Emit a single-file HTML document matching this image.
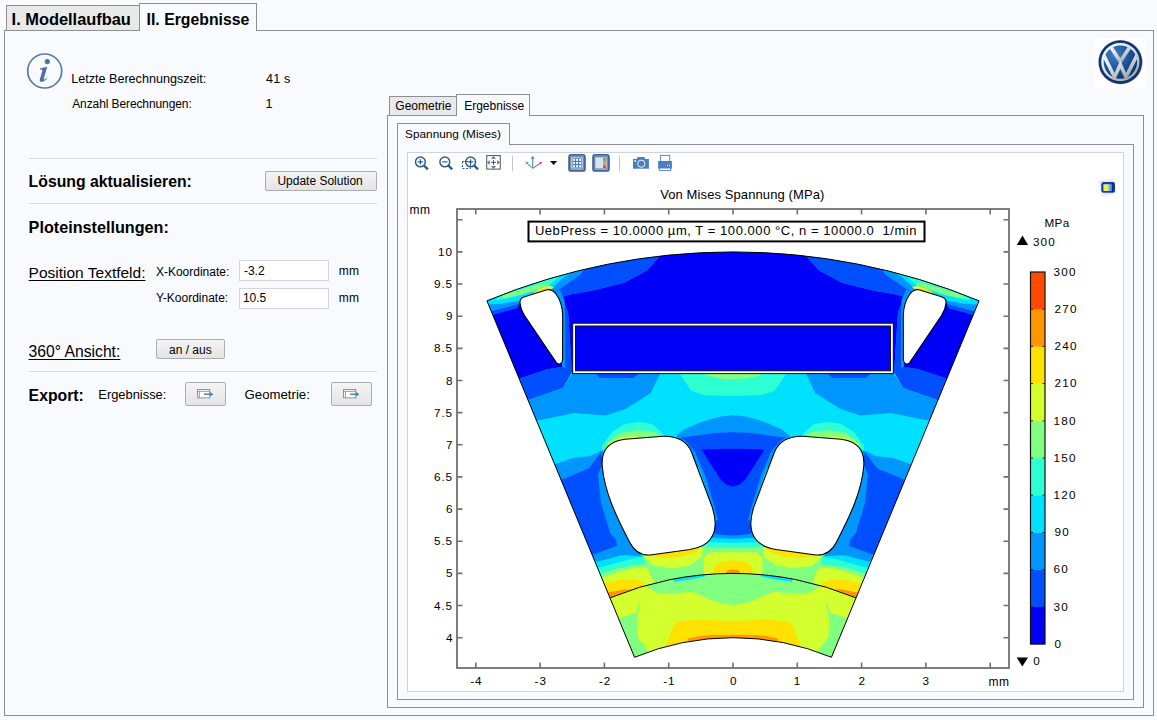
<!DOCTYPE html>
<html><head><meta charset="utf-8">
<style>
html,body{margin:0;padding:0;}
body{width:1157px;height:720px;overflow:hidden;position:relative;background:#F9FAFE;font-family:"Liberation Sans",sans-serif;color:#000;}
.a{position:absolute;box-sizing:border-box;}
.t{position:absolute;white-space:pre;line-height:1;}
.u{text-decoration:underline;text-underline-offset:1.5px;text-decoration-thickness:1px;}
.btn{position:absolute;box-sizing:border-box;border:1px solid #ADADAD;background:linear-gradient(#F4F4F4,#E4E4E4);border-radius:2px;}
.inp{position:absolute;box-sizing:border-box;border:1px solid #D3D5DA;background:#FFFFFF;}
.sep{position:absolute;height:1px;background:#D9DADD;}
</style></head>
<body>
<div class="a" style="left:4px;top:30px;width:1150px;height:686px;border:1px solid #8C8F94;"></div>
<div class="a" style="left:6px;top:5px;width:134px;height:25px;border:1px solid #8C8F94;border-bottom:none;background:#E9E9E9;"></div>
<div class="a" style="left:139px;top:3px;width:118px;height:28px;border:1px solid #8C8F94;border-bottom:none;background:#F9FAFE;"></div>
<div class="a" style="left:140px;top:30px;width:116px;height:2px;background:#F9FAFE;"></div>
<svg class="a" style="left:25px;top:51px" width="40" height="40" viewBox="0 0 40 40"><circle cx="19.7" cy="20" r="17" fill="none" stroke="#557AA8" stroke-width="1.7"/><circle cx="22.3" cy="10.6" r="2.6" fill="#4E72A2"/><path d="M14.8 17.4 L22.3 15.8 L18.8 27.6 Q18.4 29.2 20 28.3 L21.6 27.1 L22 27.8 Q19 30.8 16.4 30.9 Q14.2 30.8 14.9 28 L17.4 19.8 Q17.7 18.4 15 18.6 Z" fill="#4E72A2"/></svg>
<div class="sep" style="left:29px;top:158px;width:348px;"></div>
<div class="btn" style="left:265px;top:171px;width:112px;height:20px;"></div>
<div class="sep" style="left:29px;top:203px;width:348px;"></div>
<div class="inp" style="left:239px;top:260px;width:90px;height:21px;"></div>
<div class="inp" style="left:239px;top:288px;width:90px;height:21px;"></div>
<div class="btn" style="left:156px;top:339px;width:69px;height:20px;"></div>
<div class="sep" style="left:29px;top:371px;width:348px;"></div>
<div class="btn" style="left:185px;top:382px;width:41px;height:24px;"></div>
<svg class="a" style="left:197px;top:388px" width="18" height="12"><rect x="0.6" y="1.5" width="12.2" height="8.4" fill="#fff" stroke="#7C7C7C" stroke-width="0.8"/><path d="M0.6 3.3 H12.8 M2.4 3.3 V9.9" stroke="#7C7C7C" stroke-width="0.8"/><path d="M7 6.2 H14" stroke="#3F7AC0" stroke-width="1.4"/><path d="M13.2 3.9 L16.2 6.2 L13.2 8.5 Z" fill="#3F7AC0"/></svg>
<div class="btn" style="left:331px;top:382px;width:41px;height:24px;"></div>
<svg class="a" style="left:343px;top:388px" width="18" height="12"><rect x="0.6" y="1.5" width="12.2" height="8.4" fill="#fff" stroke="#7C7C7C" stroke-width="0.8"/><path d="M0.6 3.3 H12.8 M2.4 3.3 V9.9" stroke="#7C7C7C" stroke-width="0.8"/><path d="M7 6.2 H14" stroke="#3F7AC0" stroke-width="1.4"/><path d="M13.2 3.9 L16.2 6.2 L13.2 8.5 Z" fill="#3F7AC0"/></svg>
<div class="a" style="left:1095px;top:38px;width:50px;height:50px;background:#fff;"></div>
<svg class="a" style="left:1097px;top:39px" width="46" height="46" viewBox="0 0 46 46">
<defs><radialGradient id="vwb" cx="0.35" cy="0.3" r="0.75"><stop offset="0" stop-color="#3F80C4"/><stop offset="0.55" stop-color="#1A4F98"/><stop offset="1" stop-color="#0C2C66"/></radialGradient>
<linearGradient id="vws" x1="0" y1="0" x2="0.8" y2="1"><stop offset="0" stop-color="#FFFFFF"/><stop offset="0.5" stop-color="#DDE1E6"/><stop offset="1" stop-color="#9AA1AA"/></linearGradient>
<clipPath id="vwc"><circle cx="23.4" cy="23.1" r="17"/></clipPath></defs>
<circle cx="23.4" cy="23.1" r="22.3" fill="#C8CDD3"/>
<circle cx="23.4" cy="23.1" r="21.8" fill="#0E3370"/>
<circle cx="23.4" cy="23.1" r="19.6" fill="url(#vwb)"/>
<circle cx="23.4" cy="23.1" r="17.9" fill="none" stroke="url(#vws)" stroke-width="2.4"/>
<g clip-path="url(#vwc)" fill="none" stroke="url(#vws)" stroke-width="3.6" stroke-linejoin="miter">
<path d="M11.3 4 L23.3 22.6 L35.5 4"/>
<path d="M5.2 13 L17.6 38 L23.3 25.6 L29 38 L41.6 13"/>
</g>
</svg>
<div class="a" style="left:387px;top:115px;width:757px;height:593px;border:1px solid #8C8F94;"></div>
<div class="a" style="left:389px;top:96px;width:68px;height:19px;border:1px solid #8C8F94;border-bottom:none;background:#E9E9E9;"></div>
<div class="a" style="left:456px;top:94px;width:74px;height:22px;border:1px solid #8C8F94;border-bottom:none;background:#F9FAFE;"></div>
<div class="a" style="left:457px;top:115px;width:72px;height:2px;background:#F9FAFE;"></div>
<div class="a" style="left:397px;top:144px;width:737px;height:556px;border:1px solid #8C8F94;"></div>
<div class="a" style="left:397px;top:123px;width:113px;height:22px;border:1px solid #8C8F94;border-bottom:none;background:#F9FAFE;"></div>
<div class="a" style="left:398px;top:144px;width:111px;height:2px;background:#F9FAFE;"></div>
<div class="a" style="left:407px;top:152px;width:717px;height:540px;border:1px solid #D2D3D6;background:#FFFFFF;"></div>
<div class="t " style="left:11.6px;top:11.3px;font-size:16.4px;font-weight:bold;">I. Modellaufbau</div>
<div class="t " style="left:146.6px;top:12.3px;font-size:15.8px;font-weight:bold;">II. Ergebnisse</div>
<div class="t " style="left:71.2px;top:73.3px;font-size:12.6px;">Letzte Berechnungszeit:</div>
<div class="t " style="left:266.0px;top:73.3px;font-size:12.6px;letter-spacing:0.2px;">41 s</div>
<div class="t " style="left:72.2px;top:98.2px;font-size:12.0px;letter-spacing:-0.1px;">Anzahl Berechnungen:</div>
<div class="t " style="left:265.4px;top:98.2px;font-size:12.6px;">1</div>
<div class="t " style="left:28.6px;top:174.1px;font-size:15.8px;font-weight:bold;">Lösung aktualisieren:</div>
<div class="t " style="left:277.4px;top:175.2px;font-size:12px;">Update Solution</div>
<div class="t " style="left:28.6px;top:219.0px;font-size:16.2px;font-weight:bold;">Ploteinstellungen:</div>
<div class="t u" style="left:28.6px;top:265.4px;font-size:15.5px;">Position Textfeld:</div>
<div class="t " style="left:155.9px;top:265.7px;font-size:12px;">X-Koordinate:</div>
<div class="t " style="left:243.9px;top:264.6px;font-size:12px;">-3.2</div>
<div class="t " style="left:338.8px;top:264.6px;font-size:12px;letter-spacing:0.3px;">mm</div>
<div class="t " style="left:155.9px;top:292.1px;font-size:12px;">Y-Koordinate:</div>
<div class="t " style="left:242.9px;top:292.1px;font-size:12px;">10.5</div>
<div class="t " style="left:338.8px;top:291.8px;font-size:12px;letter-spacing:0.3px;">mm</div>
<div class="t u" style="left:28.6px;top:344.2px;font-size:15.7px;">360° Ansicht:</div>
<div class="t " style="left:169.0px;top:343.6px;font-size:12px;">an / aus</div>
<div class="t " style="left:28.6px;top:388.0px;font-size:15.8px;font-weight:bold;">Export:</div>
<div class="t " style="left:98.3px;top:388.6px;font-size:12.9px;">Ergebnisse:</div>
<div class="t " style="left:244.6px;top:387.6px;font-size:13.2px;">Geometrie:</div>
<div class="t " style="left:395.3px;top:100.3px;font-size:12px;">Geometrie</div>
<div class="t " style="left:464.2px;top:100.3px;font-size:12px;">Ergebnisse</div>
<div class="t " style="left:405.1px;top:129.1px;font-size:11.8px;">Spannung (Mises)</div>
<!-- PLOT -->
<svg class="a" style="left:0;top:0" width="1157" height="720" viewBox="0 0 1157 720">
<defs><clipPath id="cu"><path d="M486.93 300.85 A643.0 643.0 0 0 1 979.07 300.85 L856.03 597.87 A321.5 321.5 0 0 0 609.97 597.87 Z"/></clipPath><clipPath id="cr"><path d="M609.97 597.87 A321.5 321.5 0 0 1 856.03 597.87 L831.43 657.28 A257.2 257.2 0 0 0 634.57 657.28 Z"/></clipPath></defs>
<path d="M486.93 300.85 A643.0 643.0 0 0 1 979.07 300.85 L856.03 597.87 A321.5 321.5 0 0 0 609.97 597.87 Z" fill="#00E1FF"/>
<g clip-path="url(#cu)"><g><path d="M470.0 300.0 L522.0 298.0 L522.0 306.0 L517.1 309.0 L505.4 312.5 L493.8 315.7 L470.0 324.0 Z" fill="#0050FF"/>
<path d="M470.0 290.0 L600.0 250.0 L588.2 269.4 L580.0 280.0 L566.0 289.0 L556.0 292.0 L520.0 302.0 L517.1 304.5 L501.6 308.4 L490.7 311.5 L480.0 320.0 Z" fill="#0096FF"/>
<path d="M470.0 295.0 L571.0 255.0 L571.0 273.3 L563.8 277.3 L549.8 289.8 L518.7 300.7 L501.6 303.8 L487.6 304.5 L470.0 312.0 Z" fill="#00E1FF"/>
<path d="M600.0 250.0 L660.0 245.0 L659.8 256.2 L647.3 270.2 L624.0 282.7 L592.9 290.4 L571.1 294.3 L561.8 296.7 L568.0 312.2 L568.8 323.0 L572.0 372.0 L560.0 372.0 L555.0 292.0 L580.0 275.0 Z" fill="#0050FF"/>
<path d="M659.8 245.0 L734.0 245.0 L734.0 374.0 L572.0 374.0 L568.8 323.0 L568.0 312.2 L561.8 296.7 L571.1 294.3 L592.9 290.4 L624.0 282.7 L647.3 270.2 L659.8 256.2 Z" fill="#0000F8"/>
<path d="M556.0 291.0 L560.0 290.0 L564.5 300.0 L565.0 320.0 L565.0 368.0 L562.5 368.0 Z" fill="#0096FF"/>
<path d="M495.0 294.0 L530.0 282.5 L556.0 274.0 L560.0 276.0 L548.0 286.0 L520.0 295.5 L497.0 300.5 Z" fill="#2DFFD2"/>
<path d="M502.0 295.5 L522.0 289.5 L545.0 282.5 L550.0 284.0 L540.0 288.5 L521.0 294.5 L503.0 298.5 Z" fill="#80FF80"/>
<path d="M538.0 289.5 L549.0 285.5 L554.0 287.5 L549.0 290.5 L536.0 293.0 Z" fill="#D2FF2D"/>
<path d="M533.0 291.8 L545.0 288.2 L551.0 288.2 L551.0 291.0 L535.0 294.5 Z" fill="#FFE100"/>
<path d="M470.0 368.0 L520.4 378.3 L547.4 369.3 L563.1 367.0 L572.0 372.0 L563.0 388.0 L529.4 399.7 L470.0 397.0 Z" fill="#0050FF"/>
<path d="M470.0 318.0 L493.8 314.7 L505.4 311.5 L517.1 308.4 L522.0 300.0 L560.0 300.0 L562.0 367.0 L547.4 369.3 L520.4 378.3 L470.0 385.0 Z" fill="#0000F8"/>
<path d="M470.0 397.0 L529.4 399.7 L563.0 388.0 L572.0 374.0 L659.8 374.0 L650.8 392.9 L626.0 408.7 L605.8 415.4 L574.4 413.1 L540.7 419.9 L470.0 424.0 Z" fill="#0096FF"/>
<path d="M595.0 373.0 L640.0 373.0 L633.0 378.0 L600.0 378.0 Z" fill="#0050FF"/>
<path d="M680.0 374.0 L691.2 390.7 L704.7 395.2 L734.0 396.0 L734.0 374.0 Z" fill="#2DFFD2"/>
<path d="M705.0 373.0 L734.0 373.0 L734.0 379.5 L733.0 379.5 L722.0 378.8 L712.0 377.0 L705.0 375.0 Z" fill="#80FF80"/>
<path d="M602.0 446.0 L612.0 432.0 L625.0 424.0 L638.0 421.9 L652.0 424.0 L664.5 435.2 L672.0 440.0 L602.0 452.0 Z" fill="#2DFFD2"/>
<path d="M606.0 444.0 L620.0 433.0 L638.0 430.0 L655.0 432.0 L664.0 438.0 L606.0 448.0 Z" fill="#80FF80"/>
<path d="M608.0 443.0 L622.0 437.0 L640.0 436.0 L608.0 449.0 Z" fill="#D2FF2D"/>
<path d="M676.0 436.0 L683.6 429.8 L700.0 422.5 L712.6 418.5 L722.0 416.3 L733.0 415.3 L734.0 415.3 L734.0 541.0 L712.0 541.0 L716.0 520.0 L700.0 470.0 L680.0 440.0 Z" fill="#0096FF"/>
<path d="M680.0 437.5 L690.0 436.5 L700.0 435.0 L715.0 433.0 L733.0 432.3 L734.0 432.3 L734.0 536.0 L720.0 536.0 L718.0 520.0 L714.0 505.0 L705.0 475.0 L695.0 452.0 L686.0 441.0 Z" fill="#0050FF"/>
<path d="M701.6 449.5 L715.0 449.0 L733.0 448.8 L734.0 448.8 L734.0 486.5 L733.0 486.5 L727.0 485.0 L721.0 480.0 L710.0 463.0 Z" fill="#0000F8"/>
<path d="M470.0 470.0 L556.1 463.7 L573.2 458.0 L590.4 456.1 L603.0 450.0 L630.0 545.0 L643.0 557.0 L620.5 555.3 L598.0 562.2 L470.0 580.0 Z" fill="#0096FF"/>
<path d="M470.0 484.0 L562.6 479.3 L588.6 468.6 L597.8 456.4 L601.0 452.0 L603.0 462.0 L598.0 475.0 L600.8 502.0 L610.0 532.7 L616.0 540.0 L617.0 545.8 L593.7 554.5 L470.0 570.0 Z" fill="#0050FF"/>
<path d="M470.0 575.0 L597.2 561.4 L611.9 557.9 L625.7 555.3 L641.2 556.2 L650.0 553.0 L650.0 620.0 L470.0 620.0 Z" fill="#00E1FF"/>
<path d="M470.0 580.0 L599.8 567.4 L617.0 563.1 L629.1 559.6 L643.0 557.0 L650.0 556.0 L650.0 620.0 L470.0 620.0 Z" fill="#2DFFD2"/>
<path d="M470.0 585.0 L602.4 573.5 L617.0 568.3 L632.6 565.7 L644.7 564.0 L650.0 560.0 L650.0 620.0 L470.0 620.0 Z" fill="#80FF80"/>
<path d="M470.0 590.0 L604.1 576.9 L617.0 572.6 L632.6 568.3 L646.4 567.4 L649.9 572.6 L653.3 579.5 L656.0 590.0 L470.0 620.0 Z" fill="#D2FF2D"/>
<path d="M470.0 596.0 L606.7 583.0 L622.2 579.5 L636.0 579.5 L644.7 583.0 L648.0 592.0 L470.0 620.0 Z" fill="#FFE100"/>
<path d="M470.0 605.0 L609.3 592.2 L625.7 589.3 L634.0 590.0 L640.0 595.0 L470.0 620.0 Z" fill="#FF9600"/>
<path d="M643.0 553.0 L700.0 546.0 L706.0 548.0 L704.0 600.0 L650.0 600.0 L653.3 579.5 L649.9 572.6 L646.4 567.4 Z" fill="#80FF80"/>
<path d="M640.0 553.0 L700.0 545.0 L703.5 550.0 L701.7 557.0 L689.6 565.7 L672.4 568.3 L653.3 565.7 L646.4 558.8 Z" fill="#D2FF2D"/>
<path d="M640.0 552.0 L700.0 545.0 L700.0 547.5 L696.6 551.9 L681.0 557.0 L663.7 557.9 L646.4 555.3 Z" fill="#FFE100"/>
<path d="M703.0 532.0 L734.0 532.0 L734.0 600.0 L703.0 600.0 Z" fill="#0096FF"/>
<path d="M703.0 537.5 L716.0 538.0 L734.0 538.9 L734.0 600.0 L703.0 600.0 Z" fill="#00E1FF"/>
<path d="M703.0 542.0 L716.0 542.5 L734.0 543.0 L734.0 600.0 L703.0 600.0 Z" fill="#2DFFD2"/>
<path d="M703.0 546.5 L716.0 547.0 L734.0 547.5 L734.0 600.0 L703.0 600.0 Z" fill="#80FF80"/>
<path d="M703.5 557.0 L710.0 552.5 L734.0 552.0 L734.0 600.0 L703.5 600.0 Z" fill="#D2FF2D"/>
<path d="M713.3 575.0 L713.5 569.0 L716.0 564.5 L722.0 561.5 L733.0 560.5 L734.0 560.5 L734.0 600.0 L713.3 600.0 Z" fill="#FFE100"/>
<path d="M725.6 575.0 L726.5 571.0 L730.0 569.6 L734.0 569.4 L734.0 600.0 L725.6 600.0 Z" fill="#FF9600"/>
<path d="M716.0 520.0 L734.0 520.0 L734.0 535.4 L732.9 535.4 L719.0 534.6 L714.0 533.0 Z" fill="#0050FF"/></g>
<g transform="translate(1466,0) scale(-1,1)"><path d="M470.0 300.0 L522.0 298.0 L522.0 306.0 L517.1 309.0 L505.4 312.5 L493.8 315.7 L470.0 324.0 Z" fill="#0050FF"/>
<path d="M470.0 290.0 L600.0 250.0 L588.2 269.4 L580.0 280.0 L566.0 289.0 L556.0 292.0 L520.0 302.0 L517.1 304.5 L501.6 308.4 L490.7 311.5 L480.0 320.0 Z" fill="#0096FF"/>
<path d="M470.0 295.0 L571.0 255.0 L571.0 273.3 L563.8 277.3 L549.8 289.8 L518.7 300.7 L501.6 303.8 L487.6 304.5 L470.0 312.0 Z" fill="#00E1FF"/>
<path d="M600.0 250.0 L660.0 245.0 L659.8 256.2 L647.3 270.2 L624.0 282.7 L592.9 290.4 L571.1 294.3 L561.8 296.7 L568.0 312.2 L568.8 323.0 L572.0 372.0 L560.0 372.0 L555.0 292.0 L580.0 275.0 Z" fill="#0050FF"/>
<path d="M659.8 245.0 L734.0 245.0 L734.0 374.0 L572.0 374.0 L568.8 323.0 L568.0 312.2 L561.8 296.7 L571.1 294.3 L592.9 290.4 L624.0 282.7 L647.3 270.2 L659.8 256.2 Z" fill="#0000F8"/>
<path d="M556.0 291.0 L560.0 290.0 L564.5 300.0 L565.0 320.0 L565.0 368.0 L562.5 368.0 Z" fill="#0096FF"/>
<path d="M495.0 294.0 L530.0 282.5 L556.0 274.0 L560.0 276.0 L548.0 286.0 L520.0 295.5 L497.0 300.5 Z" fill="#2DFFD2"/>
<path d="M502.0 295.5 L522.0 289.5 L545.0 282.5 L550.0 284.0 L540.0 288.5 L521.0 294.5 L503.0 298.5 Z" fill="#80FF80"/>
<path d="M538.0 289.5 L549.0 285.5 L554.0 287.5 L549.0 290.5 L536.0 293.0 Z" fill="#D2FF2D"/>
<path d="M533.0 291.8 L545.0 288.2 L551.0 288.2 L551.0 291.0 L535.0 294.5 Z" fill="#FFE100"/>
<path d="M470.0 368.0 L520.4 378.3 L547.4 369.3 L563.1 367.0 L572.0 372.0 L563.0 388.0 L529.4 399.7 L470.0 397.0 Z" fill="#0050FF"/>
<path d="M470.0 318.0 L493.8 314.7 L505.4 311.5 L517.1 308.4 L522.0 300.0 L560.0 300.0 L562.0 367.0 L547.4 369.3 L520.4 378.3 L470.0 385.0 Z" fill="#0000F8"/>
<path d="M470.0 397.0 L529.4 399.7 L563.0 388.0 L572.0 374.0 L659.8 374.0 L650.8 392.9 L626.0 408.7 L605.8 415.4 L574.4 413.1 L540.7 419.9 L470.0 424.0 Z" fill="#0096FF"/>
<path d="M595.0 373.0 L640.0 373.0 L633.0 378.0 L600.0 378.0 Z" fill="#0050FF"/>
<path d="M680.0 374.0 L691.2 390.7 L704.7 395.2 L734.0 396.0 L734.0 374.0 Z" fill="#2DFFD2"/>
<path d="M705.0 373.0 L734.0 373.0 L734.0 379.5 L733.0 379.5 L722.0 378.8 L712.0 377.0 L705.0 375.0 Z" fill="#80FF80"/>
<path d="M602.0 446.0 L612.0 432.0 L625.0 424.0 L638.0 421.9 L652.0 424.0 L664.5 435.2 L672.0 440.0 L602.0 452.0 Z" fill="#2DFFD2"/>
<path d="M606.0 444.0 L620.0 433.0 L638.0 430.0 L655.0 432.0 L664.0 438.0 L606.0 448.0 Z" fill="#80FF80"/>
<path d="M608.0 443.0 L622.0 437.0 L640.0 436.0 L608.0 449.0 Z" fill="#D2FF2D"/>
<path d="M676.0 436.0 L683.6 429.8 L700.0 422.5 L712.6 418.5 L722.0 416.3 L733.0 415.3 L734.0 415.3 L734.0 541.0 L712.0 541.0 L716.0 520.0 L700.0 470.0 L680.0 440.0 Z" fill="#0096FF"/>
<path d="M680.0 437.5 L690.0 436.5 L700.0 435.0 L715.0 433.0 L733.0 432.3 L734.0 432.3 L734.0 536.0 L720.0 536.0 L718.0 520.0 L714.0 505.0 L705.0 475.0 L695.0 452.0 L686.0 441.0 Z" fill="#0050FF"/>
<path d="M701.6 449.5 L715.0 449.0 L733.0 448.8 L734.0 448.8 L734.0 486.5 L733.0 486.5 L727.0 485.0 L721.0 480.0 L710.0 463.0 Z" fill="#0000F8"/>
<path d="M470.0 470.0 L556.1 463.7 L573.2 458.0 L590.4 456.1 L603.0 450.0 L630.0 545.0 L643.0 557.0 L620.5 555.3 L598.0 562.2 L470.0 580.0 Z" fill="#0096FF"/>
<path d="M470.0 484.0 L562.6 479.3 L588.6 468.6 L597.8 456.4 L601.0 452.0 L603.0 462.0 L598.0 475.0 L600.8 502.0 L610.0 532.7 L616.0 540.0 L617.0 545.8 L593.7 554.5 L470.0 570.0 Z" fill="#0050FF"/>
<path d="M470.0 575.0 L597.2 561.4 L611.9 557.9 L625.7 555.3 L641.2 556.2 L650.0 553.0 L650.0 620.0 L470.0 620.0 Z" fill="#00E1FF"/>
<path d="M470.0 580.0 L599.8 567.4 L617.0 563.1 L629.1 559.6 L643.0 557.0 L650.0 556.0 L650.0 620.0 L470.0 620.0 Z" fill="#2DFFD2"/>
<path d="M470.0 585.0 L602.4 573.5 L617.0 568.3 L632.6 565.7 L644.7 564.0 L650.0 560.0 L650.0 620.0 L470.0 620.0 Z" fill="#80FF80"/>
<path d="M470.0 590.0 L604.1 576.9 L617.0 572.6 L632.6 568.3 L646.4 567.4 L649.9 572.6 L653.3 579.5 L656.0 590.0 L470.0 620.0 Z" fill="#D2FF2D"/>
<path d="M470.0 596.0 L606.7 583.0 L622.2 579.5 L636.0 579.5 L644.7 583.0 L648.0 592.0 L470.0 620.0 Z" fill="#FFE100"/>
<path d="M470.0 605.0 L609.3 592.2 L625.7 589.3 L634.0 590.0 L640.0 595.0 L470.0 620.0 Z" fill="#FF9600"/>
<path d="M643.0 553.0 L700.0 546.0 L706.0 548.0 L704.0 600.0 L650.0 600.0 L653.3 579.5 L649.9 572.6 L646.4 567.4 Z" fill="#80FF80"/>
<path d="M640.0 553.0 L700.0 545.0 L703.5 550.0 L701.7 557.0 L689.6 565.7 L672.4 568.3 L653.3 565.7 L646.4 558.8 Z" fill="#D2FF2D"/>
<path d="M640.0 552.0 L700.0 545.0 L700.0 547.5 L696.6 551.9 L681.0 557.0 L663.7 557.9 L646.4 555.3 Z" fill="#FFE100"/>
<path d="M703.0 532.0 L734.0 532.0 L734.0 600.0 L703.0 600.0 Z" fill="#0096FF"/>
<path d="M703.0 537.5 L716.0 538.0 L734.0 538.9 L734.0 600.0 L703.0 600.0 Z" fill="#00E1FF"/>
<path d="M703.0 542.0 L716.0 542.5 L734.0 543.0 L734.0 600.0 L703.0 600.0 Z" fill="#2DFFD2"/>
<path d="M703.0 546.5 L716.0 547.0 L734.0 547.5 L734.0 600.0 L703.0 600.0 Z" fill="#80FF80"/>
<path d="M703.5 557.0 L710.0 552.5 L734.0 552.0 L734.0 600.0 L703.5 600.0 Z" fill="#D2FF2D"/>
<path d="M713.3 575.0 L713.5 569.0 L716.0 564.5 L722.0 561.5 L733.0 560.5 L734.0 560.5 L734.0 600.0 L713.3 600.0 Z" fill="#FFE100"/>
<path d="M725.6 575.0 L726.5 571.0 L730.0 569.6 L734.0 569.4 L734.0 600.0 L725.6 600.0 Z" fill="#FF9600"/>
<path d="M716.0 520.0 L734.0 520.0 L734.0 535.4 L732.9 535.4 L719.0 534.6 L714.0 533.0 Z" fill="#0050FF"/></g></g>
<path d="M609.97 597.87 A321.5 321.5 0 0 1 856.03 597.87 L831.43 657.28 A257.2 257.2 0 0 0 634.57 657.28 Z" fill="#D2FF2D"/>
<g clip-path="url(#cr)"><g><path d="M640.0 580.0 L646.7 586.7 L652.2 590.0 L660.0 593.9 L680.0 593.0 L692.2 591.7 L700.0 595.0 L710.0 599.4 L720.0 603.0 L733.0 605.0 L733.0 570.0 Z" fill="#80FF80"/>
<path d="M674.0 582.0 L690.0 579.5 L705.0 576.5 L705.0 570.0 L674.0 570.0 Z" fill="#00E1FF"/>
<path d="M600.0 625.0 L621.0 617.8 L636.7 612.2 L638.9 602.2 L640.0 606.0 L636.7 618.9 L637.8 637.8 L647.8 650.0 L650.0 670.0 L600.0 670.0 Z" fill="#80FF80"/>
<path d="M666.7 642.2 L672.0 630.0 L675.6 622.2 L690.0 620.5 L702.2 619.4 L720.0 620.5 L733.0 621.0 L733.0 670.0 L660.0 670.0 Z" fill="#FFE100"/>
<path d="M688.0 638.5 L700.0 636.0 L710.0 635.0 L733.0 634.8 L733.0 670.0 L688.0 670.0 Z" fill="#FF9600"/></g>
<g transform="translate(1466,0) scale(-1,1)"><path d="M640.0 580.0 L646.7 586.7 L652.2 590.0 L660.0 593.9 L680.0 593.0 L692.2 591.7 L700.0 595.0 L710.0 599.4 L720.0 603.0 L733.0 605.0 L733.0 570.0 Z" fill="#80FF80"/>
<path d="M674.0 582.0 L690.0 579.5 L705.0 576.5 L705.0 570.0 L674.0 570.0 Z" fill="#00E1FF"/>
<path d="M600.0 625.0 L621.0 617.8 L636.7 612.2 L638.9 602.2 L640.0 606.0 L636.7 618.9 L637.8 637.8 L647.8 650.0 L650.0 670.0 L600.0 670.0 Z" fill="#80FF80"/>
<path d="M666.7 642.2 L672.0 630.0 L675.6 622.2 L690.0 620.5 L702.2 619.4 L720.0 620.5 L733.0 621.0 L733.0 670.0 L660.0 670.0 Z" fill="#FFE100"/>
<path d="M688.0 638.5 L700.0 636.0 L710.0 635.0 L733.0 634.8 L733.0 670.0 L688.0 670.0 Z" fill="#FF9600"/></g></g>
<path d="M520 303 C519.5 299.5 521.5 297.8 524.5 296.8 L547 289.8 C550.5 289 553 290.2 556 294 C560 299.5 562.6 306 562.7 316 L562.6 359.5 C562.5 363.8 559 365.5 556.5 362.8 L524.5 315.5 C521.5 311 520.3 307 520 303 Z" fill="#fff" stroke="#000" stroke-width="1.1"/>
<path d="M520 303 C519.5 299.5 521.5 297.8 524.5 296.8 L547 289.8 C550.5 289 553 290.2 556 294 C560 299.5 562.6 306 562.7 316 L562.6 359.5 C562.5 363.8 559 365.5 556.5 362.8 L524.5 315.5 C521.5 311 520.3 307 520 303 Z" fill="#fff" stroke="#000" stroke-width="1.1" transform="translate(1466,0) scale(-1,1)"/>
<path d="M602.2 466 C601.2 452 607 441.5 625 439.3 L663 436.3 C679 436 687.5 442.5 691.5 452 L712.4 507.6 C716 519 716.5 531 710.5 539 C706 545.5 699 548 690 549.5 L652 554.8 C641 556.3 633.5 550 629.5 542 C616 516 604.5 492 602.2 466 Z" fill="#fff" stroke="#000" stroke-width="1.1"/>
<path d="M602.2 466 C601.2 452 607 441.5 625 439.3 L663 436.3 C679 436 687.5 442.5 691.5 452 L712.4 507.6 C716 519 716.5 531 710.5 539 C706 545.5 699 548 690 549.5 L652 554.8 C641 556.3 633.5 550 629.5 542 C616 516 604.5 492 602.2 466 Z" fill="#fff" stroke="#000" stroke-width="1.1" transform="translate(1466,0) scale(-1,1)"/>
<rect x="572.7" y="323.2" width="320.6" height="50.4" fill="#fff" stroke="#111" stroke-width="1"/>
<rect x="575.5" y="326" width="315" height="44.8" fill="#0000F8" stroke="#111" stroke-width="1"/>
<path d="M486.93 300.85 A643.0 643.0 0 0 1 979.07 300.85 L831.43 657.28 A257.2 257.2 0 0 0 634.57 657.28 Z" fill="none" stroke="#000" stroke-width="1"/>
<path d="M609.97 597.87 A321.5 321.5 0 0 1 856.03 597.87" fill="none" stroke="#000" stroke-width="1"/>
</svg>
<svg class="a" style="left:0;top:0" width="1157" height="720" viewBox="0 0 1157 720">
<g fill="none" stroke="#2C5C8F" stroke-width="1.5"><circle cx="420.4" cy="161.9" r="4.9"/><path d="M424 165.5 L427.8 169.3" stroke-width="2.4"/><path d="M417.7 161.9 H423.1 M420.4 159.2 V164.6" stroke-width="1.15"/><circle cx="444.8" cy="161.9" r="4.9"/><path d="M448.4 165.5 L452.2 169.3" stroke-width="2.4"/><path d="M442.1 161.9 H447.5" stroke-width="1.15"/><circle cx="470.6" cy="161.9" r="4.9"/><path d="M474.2 165.5 L478 169.3" stroke-width="2.4"/><path d="M467.9 161.9 H473.3 M470.6 159.2 V164.6" stroke-width="1.15"/></g>
<rect x="462.5" y="161.5" width="8" height="7" fill="none" stroke="#2C5C8F" stroke-width="1" stroke-dasharray="2,1.5"/>
<rect x="486.7" y="155.6" width="13.6" height="13.5" fill="#fff" stroke="#5A5A5A" stroke-width="1.05"/>
<path d="M491 162.4 H496 M493.5 160 V164.9" stroke="#444" stroke-width="0.9"/>
<path d="M491 158.7 L493.5 155.9 L496 158.7 Z M491 166.1 L493.5 168.9 L496 166.1 Z M489.8 160 L487 162.4 L489.8 164.8 Z M497.2 160 L500 162.4 L497.2 164.8 Z" fill="#3F7DC0"/>
<path d="M512.5 155.5 V171.5" stroke="#C8C8C8" stroke-width="1"/>
<path d="M619.5 155.5 V171.5" stroke="#C8C8C8" stroke-width="1"/>
<path d="M532.7 168.3 V157.2" stroke="#3C82C8" stroke-width="1"/><path d="M530.9 158.8 L532.7 155.8 L534.5 158.8 Z" fill="#3C82C8"/>
<path d="M532.7 168.3 L526.5 162.8" stroke="#3CAA3C" stroke-width="1"/><path d="M525.3 161.6 L528.6 162.4 L526.8 164.3 Z" fill="#3CAA3C"/>
<path d="M532.7 168.3 L541.5 162.5" stroke="#E0306A" stroke-width="1"/><path d="M542.5 161.8 L539.3 162.3 L540.6 164.5 Z" fill="#E0306A"/>
<path d="M550 161 H557.2 L553.6 165 Z" fill="#111"/>
<rect x="569.1" y="154.9" width="15.8" height="16" rx="2" fill="#CFE6FB" stroke="#3A64A8" stroke-width="1.8"/>
<rect x="570.8000000000001" y="156.8" width="12.4" height="12.2" fill="none" stroke="#5A5A5A" stroke-width="0.9"/>
<rect x="572.4000000000001" y="158.3" width="9.2" height="9.2" fill="#3F78C0"/>
<rect x="573.1" y="159" width="1.9" height="1.9" fill="#fff"/>
<rect x="573.1" y="162" width="1.9" height="1.9" fill="#fff"/>
<rect x="573.1" y="165" width="1.9" height="1.9" fill="#fff"/>
<rect x="576.1" y="159" width="1.9" height="1.9" fill="#fff"/>
<rect x="576.1" y="162" width="1.9" height="1.9" fill="#fff"/>
<rect x="576.1" y="165" width="1.9" height="1.9" fill="#fff"/>
<rect x="579.1" y="159" width="1.9" height="1.9" fill="#fff"/>
<rect x="579.1" y="162" width="1.9" height="1.9" fill="#fff"/>
<rect x="579.1" y="165" width="1.9" height="1.9" fill="#fff"/>
<rect x="593.1" y="154.9" width="15.8" height="16" rx="2" fill="#CFE6FB" stroke="#3A64A8" stroke-width="1.8"/>
<rect x="594.8000000000001" y="156.8" width="12.4" height="12.2" fill="none" stroke="#5A5A5A" stroke-width="0.9"/>
<defs><linearGradient id="cbg" x1="0" y1="0" x2="0" y2="1"><stop offset="0" stop-color="#5A8AC0"/><stop offset="0.55" stop-color="#F0A020"/><stop offset="1" stop-color="#E02020"/></linearGradient></defs>
<rect x="603.2" y="158" width="2.6" height="10" fill="url(#cbg)"/>
<rect x="633" y="158.9" width="15.9" height="9.8" fill="#4A7FBF"/><rect x="637.1" y="157.1" width="7.8" height="2.5" rx="1" fill="#4A7FBF"/>
<circle cx="641.3" cy="163.7" r="3.6" fill="#4A7FBF" stroke="#fff" stroke-width="0.9"/><rect x="634.3" y="160.2" width="1.8" height="1.5" fill="#fff"/>
<rect x="660.6" y="155.4" width="9.2" height="6" fill="#fff" stroke="#4A7FBF" stroke-width="0.9"/>
<rect x="658.1" y="161" width="13.8" height="7.7" fill="#4A7FBF"/><rect x="659.7" y="168" width="11" height="2.6" fill="#fff" stroke="#4A7FBF" stroke-width="0.9"/>
<rect x="667" y="164.9" width="1" height="1" fill="#fff"/><rect x="669" y="164.9" width="1" height="1" fill="#fff"/>
<path d="M1098 181 L1113 178.5 L1117 193 L1102 197 Z" fill="#E8E8E8" opacity="0.8"/>
<defs><linearGradient id="lgi" x1="0" y1="0" x2="1" y2="0"><stop offset="0" stop-color="#F4EC50"/><stop offset="0.45" stop-color="#E8F060"/><stop offset="0.7" stop-color="#50B0F0"/><stop offset="1" stop-color="#2070E0"/></linearGradient></defs><rect x="1101.3" y="182" width="13.7" height="10.8" rx="2.2" fill="#1838B8"/><rect x="1103.4" y="184.2" width="9.4" height="6.8" fill="url(#lgi)"/><path d="M1112.8 183 V192" stroke="#0A1870" stroke-width="1"/>
</svg>
<svg class="a" style="left:0;top:0" width="1157" height="720" viewBox="0 0 1157 720">
<rect x="528.5" y="221.6" width="396" height="19.8" fill="#fff" stroke="#000" stroke-width="2"/>
<rect x="457.0" y="209.0" width="552.0" height="459.0" fill="none" stroke="#707070" stroke-width="1.8"/>
<path d="M475.8 668.0 V662.5 M475.8 209.0 V214.5 M540.1 668.0 V662.5 M540.1 209.0 V214.5 M604.4 668.0 V662.5 M604.4 209.0 V214.5 M668.7 668.0 V662.5 M668.7 209.0 V214.5 M733.0 668.0 V662.5 M733.0 209.0 V214.5 M797.3 668.0 V662.5 M797.3 209.0 V214.5 M861.6 668.0 V662.5 M861.6 209.0 V214.5 M925.9 668.0 V662.5 M925.9 209.0 V214.5 M990.2 668.0 V662.5 M990.2 209.0 V214.5 M457.0 637.7 H462.5 M1009.0 637.7 H1003.5 M457.0 605.5 H462.5 M1009.0 605.5 H1003.5 M457.0 573.4 H462.5 M1009.0 573.4 H1003.5 M457.0 541.2 H462.5 M1009.0 541.2 H1003.5 M457.0 509.1 H462.5 M1009.0 509.1 H1003.5 M457.0 476.9 H462.5 M1009.0 476.9 H1003.5 M457.0 444.8 H462.5 M1009.0 444.8 H1003.5 M457.0 412.6 H462.5 M1009.0 412.6 H1003.5 M457.0 380.5 H462.5 M1009.0 380.5 H1003.5 M457.0 348.4 H462.5 M1009.0 348.4 H1003.5 M457.0 316.2 H462.5 M1009.0 316.2 H1003.5 M457.0 284.0 H462.5 M1009.0 284.0 H1003.5 M457.0 251.9 H462.5 M1009.0 251.9 H1003.5 M457.0 219.8 H462.5 M1009.0 219.8 H1003.5" stroke="#707070" stroke-width="1.6" fill="none"/>
<rect x="1030.5" y="606.80" width="14.5" height="37.50" fill="#0000F8"/>
<rect x="1030.5" y="569.60" width="14.5" height="37.50" fill="#0050FF"/>
<rect x="1030.5" y="532.40" width="14.5" height="37.50" fill="#0096FF"/>
<rect x="1030.5" y="495.20" width="14.5" height="37.50" fill="#00E1FF"/>
<rect x="1030.5" y="458.00" width="14.5" height="37.50" fill="#2DFFD2"/>
<rect x="1030.5" y="420.80" width="14.5" height="37.50" fill="#80FF80"/>
<rect x="1030.5" y="383.60" width="14.5" height="37.50" fill="#D2FF2D"/>
<rect x="1030.5" y="346.40" width="14.5" height="37.50" fill="#FFE100"/>
<rect x="1030.5" y="309.20" width="14.5" height="37.50" fill="#FF9600"/>
<rect x="1030.5" y="272.00" width="14.5" height="37.50" fill="#FF4B00"/>
<rect x="1030.5" y="272.0" width="14.5" height="372.0" fill="none" stroke="#111" stroke-width="1.2"/>
<path d="M1030.5 309.2 H1033.0 M1045.0 309.2 H1042.5 M1030.5 346.4 H1033.0 M1045.0 346.4 H1042.5 M1030.5 383.6 H1033.0 M1045.0 383.6 H1042.5 M1030.5 420.8 H1033.0 M1045.0 420.8 H1042.5 M1030.5 458.0 H1033.0 M1045.0 458.0 H1042.5 M1030.5 495.2 H1033.0 M1045.0 495.2 H1042.5 M1030.5 532.4 H1033.0 M1045.0 532.4 H1042.5 M1030.5 569.6 H1033.0 M1045.0 569.6 H1042.5 M1030.5 606.8 H1033.0 M1045.0 606.8 H1042.5" stroke="#222" stroke-width="1" fill="none"/>
<path d="M1016.8 244.9 L1022.45 235.5 L1028.1 244.9 Z" fill="#000"/>
<path d="M1016.7 657.4 L1028 657.4 L1022.35 666.4 Z" fill="#000"/>
</svg>
<div class="t" style="left:660.2px;top:187.9px;font-size:13px;letter-spacing:0.1px;">Von Mises Spannung (MPa)</div>
<div class="t" style="left:534.9px;top:223.9px;font-size:13px;letter-spacing:0.55px;">UebPress = 10.0000 µm, T = 100.000 °C, n = 10000.0  1/min</div>
<div class="t" style="left:446.0px;top:631.7px;font-size:11.7px;letter-spacing:0.9px;">4</div>
<div class="t" style="left:434.0px;top:599.5px;font-size:11.7px;letter-spacing:0.9px;">4.5</div>
<div class="t" style="left:446.0px;top:567.4px;font-size:11.7px;letter-spacing:0.9px;">5</div>
<div class="t" style="left:434.0px;top:535.2px;font-size:11.7px;letter-spacing:0.9px;">5.5</div>
<div class="t" style="left:446.0px;top:503.1px;font-size:11.7px;letter-spacing:0.9px;">6</div>
<div class="t" style="left:434.0px;top:470.9px;font-size:11.7px;letter-spacing:0.9px;">6.5</div>
<div class="t" style="left:446.0px;top:438.8px;font-size:11.7px;letter-spacing:0.9px;">7</div>
<div class="t" style="left:434.0px;top:406.6px;font-size:11.7px;letter-spacing:0.9px;">7.5</div>
<div class="t" style="left:446.0px;top:374.5px;font-size:11.7px;letter-spacing:0.9px;">8</div>
<div class="t" style="left:434.0px;top:342.4px;font-size:11.7px;letter-spacing:0.9px;">8.5</div>
<div class="t" style="left:446.0px;top:310.2px;font-size:11.7px;letter-spacing:0.9px;">9</div>
<div class="t" style="left:434.0px;top:278.0px;font-size:11.7px;letter-spacing:0.9px;">9.5</div>
<div class="t" style="left:438.0px;top:245.9px;font-size:11.7px;letter-spacing:0.9px;">10</div>
<div class="t" style="left:470.3px;top:675.2px;font-size:11.7px;letter-spacing:0.9px;">-4</div>
<div class="t" style="left:534.6px;top:675.2px;font-size:11.7px;letter-spacing:0.9px;">-3</div>
<div class="t" style="left:598.9px;top:675.2px;font-size:11.7px;letter-spacing:0.9px;">-2</div>
<div class="t" style="left:663.2px;top:675.2px;font-size:11.7px;letter-spacing:0.9px;">-1</div>
<div class="t" style="left:730.0px;top:675.2px;font-size:11.7px;letter-spacing:0.9px;">0</div>
<div class="t" style="left:793.8px;top:675.2px;font-size:11.7px;letter-spacing:0.9px;">1</div>
<div class="t" style="left:858.6px;top:675.2px;font-size:11.7px;letter-spacing:0.9px;">2</div>
<div class="t" style="left:922.4px;top:675.2px;font-size:11.7px;letter-spacing:0.9px;">3</div>
<div class="t" style="left:988.5px;top:675.8px;font-size:12px;letter-spacing:0.5px;">mm</div>
<div class="t" style="left:409.4px;top:203.8px;font-size:12px;letter-spacing:0.5px;">mm</div>
<div class="t" style="left:1044.5px;top:217.2px;font-size:11.7px;letter-spacing:0.3px;">MPa</div>
<div class="t" style="left:1032.9px;top:235.5px;font-size:11.7px;letter-spacing:1.2px;">300</div>
<div class="t" style="left:1033.3px;top:655.2px;font-size:11.7px;letter-spacing:1.2px;">0</div>
<div class="t" style="left:1053.5px;top:265.8px;font-size:11.7px;letter-spacing:1.2px;">300</div>
<div class="t" style="left:1054.5px;top:303.0px;font-size:11.7px;letter-spacing:1.2px;">270</div>
<div class="t" style="left:1054.5px;top:340.2px;font-size:11.7px;letter-spacing:1.2px;">240</div>
<div class="t" style="left:1054.5px;top:377.4px;font-size:11.7px;letter-spacing:1.2px;">210</div>
<div class="t" style="left:1053.5px;top:414.6px;font-size:11.7px;letter-spacing:1.2px;">180</div>
<div class="t" style="left:1053.5px;top:451.8px;font-size:11.7px;letter-spacing:1.2px;">150</div>
<div class="t" style="left:1053.5px;top:489.0px;font-size:11.7px;letter-spacing:1.2px;">120</div>
<div class="t" style="left:1054.5px;top:526.2px;font-size:11.7px;letter-spacing:1.2px;">90</div>
<div class="t" style="left:1053.5px;top:563.4px;font-size:11.7px;letter-spacing:1.2px;">60</div>
<div class="t" style="left:1053.5px;top:600.6px;font-size:11.7px;letter-spacing:1.2px;">30</div>
<div class="t" style="left:1054.5px;top:637.8px;font-size:11.7px;letter-spacing:1.2px;">0</div>
<!-- /PLOT -->
</body></html>
